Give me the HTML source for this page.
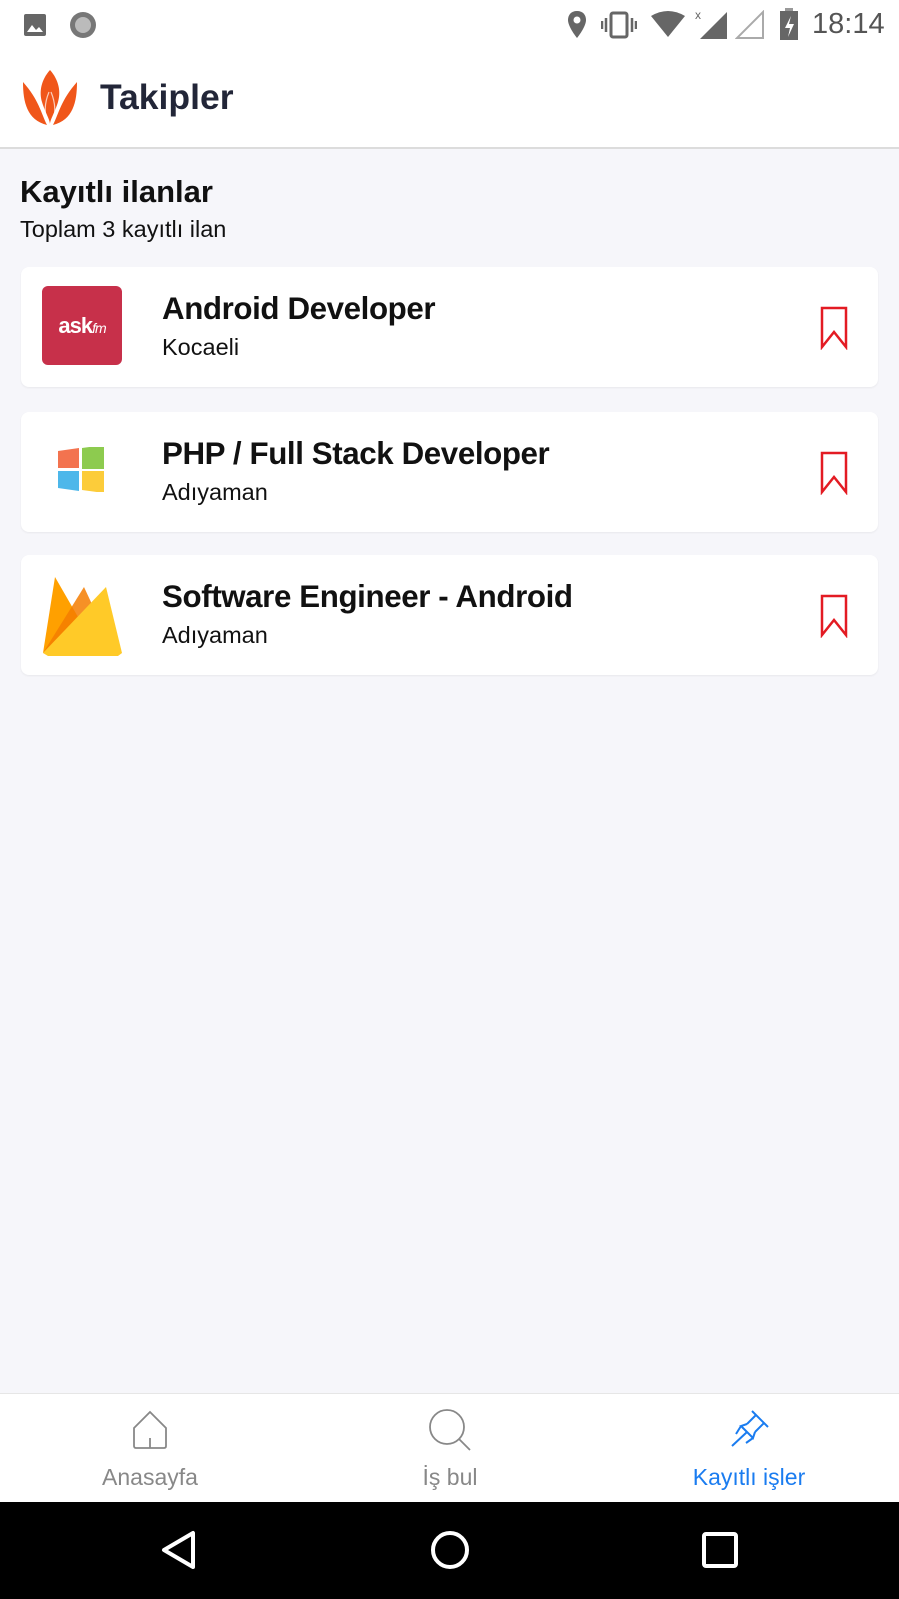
<!DOCTYPE html>
<html><head><meta charset="utf-8"><style>
*{margin:0;padding:0;box-sizing:border-box}
body{width:899px;height:1599px;background:#f6f6fa;font-family:"Liberation Sans",sans-serif;position:relative;overflow:hidden}
.abs{position:absolute}
.status{top:0;left:0;width:899px;height:50px;background:#fff}
.header{top:50px;left:0;width:899px;height:99px;background:#fff;border-bottom:2px solid #dcdcdc}
.card{left:21px;width:857px;height:120px;background:#fff;border-radius:8px;box-shadow:0 1px 2px rgba(0,0,0,.06)}
.card .t{position:absolute;left:141px;top:24px;font-size:31.3px;font-weight:bold;color:#111;letter-spacing:-.4px}
.card .s{position:absolute;left:141px;top:67px;font-size:23.5px;color:#111}
.card svg.bm{position:absolute;left:799px;top:39px}
.nav{top:1393px;left:0;width:899px;height:110px;background:#fff;border-top:1px solid #e6e6e6}
.lbl{position:absolute;top:70px;font-size:23px;color:#888;transform:translateX(-50%)}
.sys{top:1502px;left:0;width:899px;height:97px;background:#000}
</style></head><body>
<div class="abs status">
  <svg class="abs" style="left:23px;top:13px" width="24" height="24"><rect x="1" y="1" width="22" height="22" rx="2" fill="#666"/><path d="M4 19l5-7 4 5 3-3 4 5z" fill="#fff"/></svg>
  <svg class="abs" style="left:68px;top:10px" width="30" height="30"><circle cx="15" cy="15" r="13" fill="#777"/><circle cx="15" cy="15" r="8" fill="#bbb"/></svg>
  <svg class="abs" style="left:566px;top:10px" width="22" height="30"><path d="M11 1C5 1 2 5 2 10c0 7 9 18 9 18s9-11 9-18c0-5-3-9-9-9z" fill="#666"/><circle cx="11" cy="10" r="3.5" fill="#fff"/></svg>
  <svg class="abs" style="left:601px;top:10px" width="36" height="30"><rect x="10" y="3" width="16" height="24" rx="2" fill="none" stroke="#666" stroke-width="3"/><path d="M5 8v14M1 11v8M31 8v14M35 11v8" stroke="#666" stroke-width="2.5"/></svg>
  <svg class="abs" style="left:650px;top:10px" width="36" height="28"><path d="M1 6Q18-4 35 6L18 27z" fill="#666"/></svg>
  <svg class="abs" style="left:695px;top:8px" width="34" height="32"><text x="0" y="11" font-size="12" fill="#666" font-family="Liberation Sans">x</text><path d="M32 4V31H5z" fill="#666"/></svg>
  <svg class="abs" style="left:735px;top:10px" width="30" height="30"><path d="M28 2V28H2z" fill="none" stroke="#aaa" stroke-width="2"/></svg>
  <svg class="abs" style="left:778px;top:7px" width="22" height="34"><rect x="7" y="1" width="8" height="4" fill="#999"/><rect x="2" y="4" width="18" height="29" fill="#666"/><path d="M13 9l-6 12h5l-2 9 6-13h-5z" fill="#fff"/></svg>
  <div class="abs" style="left:812px;top:8px;font-size:29px;color:#555">18:14</div>
</div>
<div class="abs header">
  <svg class="abs" style="left:22px;top:20px" width="56" height="55" viewBox="0 0 56 55"><path d="M28 0C19 10 17 22 20 32c3 10 8 18 8 22 0-4 5-12 8-22 3-10 1-22-8-32z" fill="#f0561a"/><path d="M1 12c0 20 4 38 24 43C19 43 17 30 1 12z" fill="#f0561a"/><path d="M55 12c0 20-4 38-24 43 6-12 8-25 24-43z" fill="#f0561a"/><path d="M26 54C22 44 22 34 27 22M30 54C34 44 34 34 29 22" stroke="#fff" stroke-width="1.2" fill="none" opacity=".7"/></svg>
  <div class="abs" style="left:100px;top:27px;font-size:35.5px;font-weight:bold;color:#222638">Takipler</div>
</div>
<div class="abs" style="left:20px;top:174px;font-size:31px;font-weight:bold;color:#111">Kayıtlı ilanlar</div>
<div class="abs" style="left:20px;top:216px;font-size:23.5px;color:#111">Toplam 3 kayıtlı ilan</div>

<div class="abs card" style="top:267px">
  <div class="abs" style="left:21px;top:19px;width:80px;height:79px;background:#c7304a;border-radius:6px;color:#fff;font-weight:bold;font-size:22px;text-align:center;line-height:79px;letter-spacing:-1px">ask<span style="font-size:14px;font-style:italic;font-weight:normal">fm</span></div>
  <div class="t">Android Developer</div><div class="s">Kocaeli</div>
  <svg class="bm" width="28" height="44"><path d="M2 2H26V41L14 26 2 41z" fill="none" stroke="#e31b23" stroke-width="2.5"/></svg>
</div>
<div class="abs card" style="top:412px">
  <svg class="abs" style="left:36px;top:35px" width="50" height="45"><path d="M1 4l21-3v20H1z" fill="#f3734f"/><path d="M25 1l22-3v24H25z" fill="#8dcb4f"/><path d="M1 24h21v20l-21-3z" fill="#4db7ea"/><path d="M25 24h22v22l-22-3z" fill="#fccc3a"/></svg>
  <div class="t">PHP / Full Stack Developer</div><div class="s">Adıyaman</div>
  <svg class="bm" width="28" height="44"><path d="M2 2H26V41L14 26 2 41z" fill="none" stroke="#e31b23" stroke-width="2.5"/></svg>
</div>
<div class="abs card" style="top:555px">
  <svg class="abs" style="left:21px;top:20px" width="82" height="82" viewBox="0 0 82 82"><path d="M1 78L13 2 36 42z" fill="#ffa000"/><path d="M1 78L42 12l13 28z" fill="#f57c00" opacity=".85"/><path d="M1 78L64 12 80 78H1z" fill="#ffca28"/><path d="M1 78l5 3h70l4-3z" fill="#ffca28"/></svg>
  <div class="t">Software Engineer - Android</div><div class="s">Adıyaman</div>
  <svg class="bm" width="28" height="44"><path d="M2 2H26V41L14 26 2 41z" fill="none" stroke="#e31b23" stroke-width="2.5"/></svg>
</div>

<div class="abs nav">
  <svg class="abs" style="left:132px;top:16px" width="36" height="40"><path d="M2 18L18 2 34 18V36Q34 38 32 38H4Q2 38 2 36z M18 38V28" fill="none" stroke="#888" stroke-width="1.8"/></svg>
  <svg class="abs" style="left:428px;top:14px" width="44" height="44"><circle cx="19" cy="19" r="17" fill="none" stroke="#888" stroke-width="1.8"/><path d="M31 31l11 11" stroke="#888" stroke-width="1.8"/></svg>
  <svg class="abs" style="left:728px;top:14px" width="42" height="42"><path d="M24 3l16 16M28 7l-9 9M36 15l-9 9M19 16l-6 2 12 12 2-6M19 24L4 38M13 18l-5 8M25 30l-7 5" fill="none" stroke="#1a7cf0" stroke-width="2"/></svg>
  <div class="lbl" style="left:150px">Anasayfa</div>
  <div class="lbl" style="left:450px">İş bul</div>
  <div class="lbl" style="left:749px;color:#1a7cf0">Kayıtlı işler</div>
</div>
<div class="abs sys">
  <svg class="abs" style="left:160px;top:28px" width="40" height="40"><path d="M33 3V37L4 20z" fill="none" stroke="#fff" stroke-width="4" stroke-linejoin="round"/></svg>
  <svg class="abs" style="left:430px;top:28px" width="40" height="40"><circle cx="20" cy="20" r="17" fill="none" stroke="#fff" stroke-width="4"/></svg>
  <svg class="abs" style="left:702px;top:30px" width="36" height="36"><rect x="2" y="2" width="32" height="32" rx="2" fill="none" stroke="#fff" stroke-width="4"/></svg>
</div>
</body></html>
